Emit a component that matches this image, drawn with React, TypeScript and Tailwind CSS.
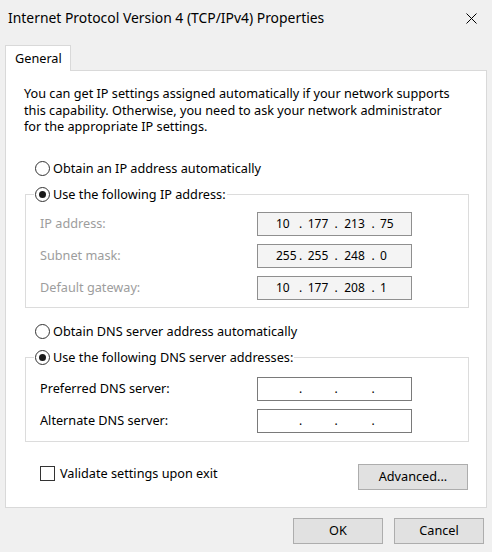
import React from "react";

const Radio = ({ checked, label }: { checked?: boolean; label: string }) => (
  <div className="flex items-center h-[18px]">
    <span className="w-[15px] h-[15px] rounded-full border border-[#333333] bg-white flex items-center justify-center shrink-0">
      {checked && <span className="w-[7px] h-[7px] rounded-full bg-[#1a1a1a]" />}
    </span>
    <span className="ml-[3px] text-black">{label}</span>
  </div>
);

const IpBox = ({ parts, disabled }: { parts: string[]; disabled?: boolean }) => (
  <div
    className={
      disabled
        ? "w-[155px] h-[24px] border border-[#8f8f8f] bg-[#f4f4f4] flex items-center pl-[18px] text-black text-[12px]"
        : "w-[155px] h-[24px] border border-[#7a7a7a] bg-white flex items-center pl-[18px] text-black text-[12px]"
    }
  >
    <span className="w-[22px] whitespace-nowrap">{parts[0]}</span>
    <span className="w-[5px] text-center">.</span>
    <span className="w-[30px] text-center">{parts[1]}</span>
    <span className="w-[6px] text-center">.</span>
    <span className="w-[31px] text-center">{parts[2]}</span>
    <span className="w-[6px] text-center">.</span>
    <span className="pl-[4px]">{parts[3]}</span>
  </div>
);

const Row = ({ label, parts, disabled }: { label: string; parts: string[]; disabled?: boolean }) => (
  <div className="flex items-center h-[24px]">
    <span className={disabled ? "w-[217px] text-[#9d9d9d]" : "w-[217px] text-black"}>{label}</span>
    <IpBox parts={parts} disabled={disabled} />
  </div>
);

const Button = ({ label, className }: { label: string; className: string }) => (
  <div className={`h-[26px] border border-[#adadad] bg-[#e1e1e1] flex items-center justify-center text-black ${className}`}>
    {label}
  </div>
);

export default function App() {
  return (
    <div
      className="w-[492px] h-[552px] bg-[#f0f0f0] text-[12.7px] text-black flex flex-col"
      style={{ fontFamily: '"Noto Sans", "Liberation Sans", sans-serif' }}
    >
      <div className="h-[36px] flex items-center justify-between pl-[8px] pr-[15px] shrink-0">
        <span className="text-[13.9px]">Internet Protocol Version 4 (TCP/IPv4) Properties</span>
        <svg width="11" height="11" viewBox="0 0 11 11">
          <path d="M0.5 0.5 L10.5 10.5 M10.5 0.5 L0.5 10.5" stroke="#000" strokeWidth="1" />
        </svg>
      </div>

      <div className="mt-[9px] ml-[5px] w-[66px] h-[26px] border border-b-0 border-[#d9d9d9] bg-white -mb-px relative z-10 flex items-center pl-[9px] shrink-0">
        General
      </div>

      <div className="ml-[5px] w-[482px] border border-[#d9d9d9] bg-white flex flex-col pb-[17px] shrink-0">
        <p className="mt-[14px] ml-[18px] leading-[16.5px] whitespace-nowrap">
          You can get IP settings assigned automatically if your network supports
          <br />
          this capability. Otherwise, you need to ask your network administrator
          <br />
          for the appropriate IP settings.
        </p>

        <div className="mt-[25px] ml-[29px]">
          <Radio label="Obtain an IP address automatically" />
        </div>

        <fieldset className="mt-[8px] ml-[19px] w-[444px] border border-[#dcdcdc] pb-[7px]">
          <legend className="ml-[8px] px-[1px]">
            <Radio checked label="Use the following IP address:" />
          </legend>
          <div className="pl-[14px] mt-[8px] flex flex-col gap-[8px]">
            <Row disabled label="IP address:" parts={["10", "177", "213", "75"]} />
            <Row disabled label="Subnet mask:" parts={["255", "255", "248", "0"]} />
            <Row disabled label="Default gateway:" parts={["10", "177", "208", "1"]} />
          </div>
        </fieldset>

        <div className="mt-[15px] ml-[29px]">
          <Radio label="Obtain DNS server address automatically" />
        </div>

        <fieldset className="mt-[8px] ml-[19px] w-[444px] border border-[#dcdcdc] pb-[8px]">
          <legend className="ml-[8px] px-[1px]">
            <Radio checked label="Use the following DNS server addresses:" />
          </legend>
          <div className="pl-[14px] mt-[10px] flex flex-col gap-[8px]">
            <Row label="Preferred DNS server:" parts={["", "", "", ""]} />
            <Row label="Alternate DNS server:" parts={["", "", "", ""]} />
          </div>
        </fieldset>

        <div className="mt-[22px] flex items-start justify-between pl-[34px] pr-[18px]">
          <div className="flex items-center">
            <span className="w-[15px] h-[15px] border border-[#333333] bg-white shrink-0" />
            <span className="ml-[5px]">Validate settings upon exit</span>
          </div>
          <Button label="Advanced..." className="w-[110px]" />
        </div>
      </div>

      <div className="mt-[10px] flex justify-end gap-[11px] pr-[8px]">
        <Button label="OK" className="w-[90px]" />
        <Button label="Cancel" className="w-[90px]" />
      </div>
    </div>
  );
}
